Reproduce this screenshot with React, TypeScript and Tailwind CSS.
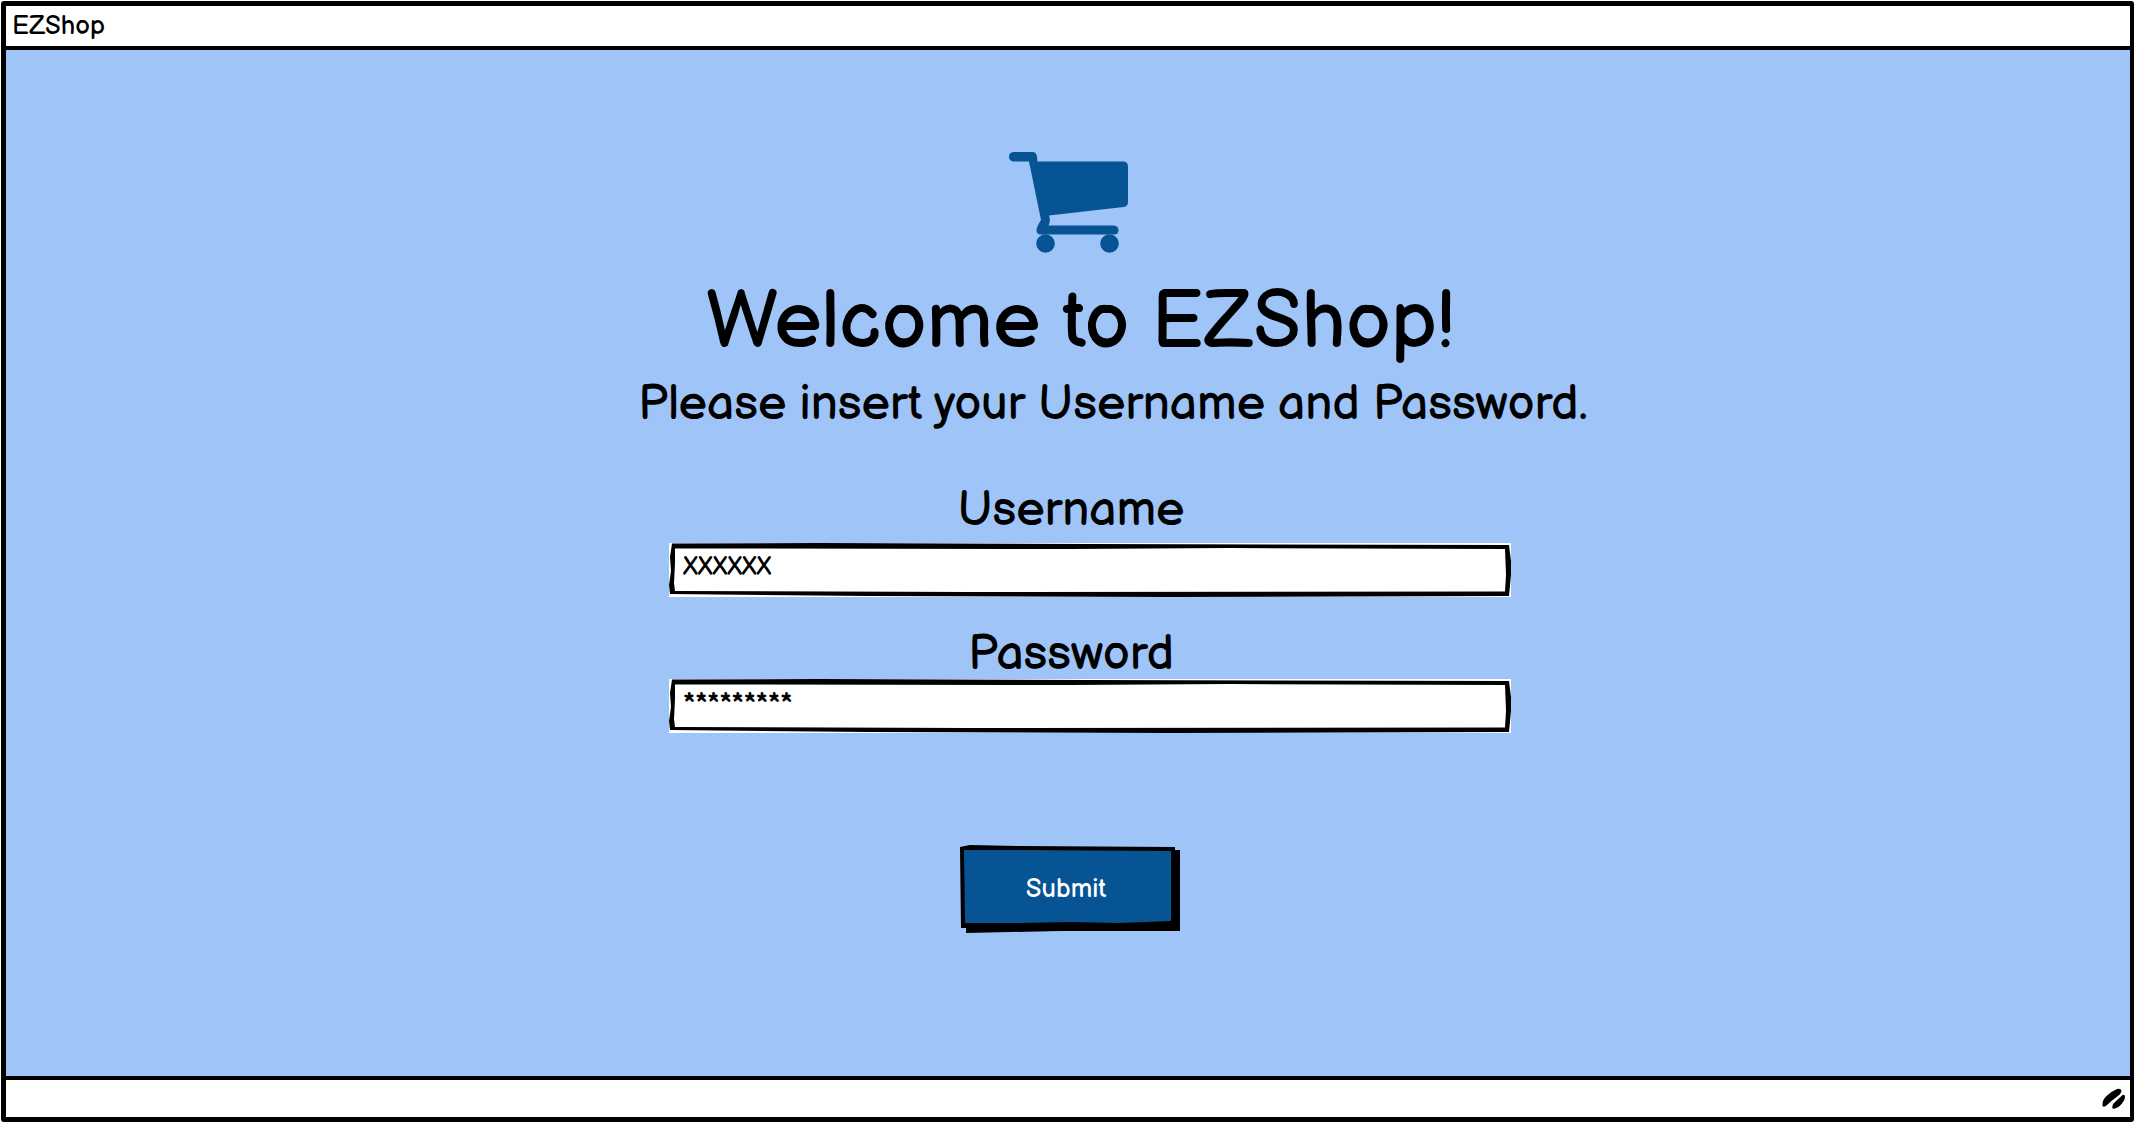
import type { ReactNode } from "react";

function Cart() {
  return (
    <svg viewBox="0 0 119 101" className="h-[101px] w-[119px]" fill="#075494" aria-hidden="true">
      <path d="M4.500 0H23.500Q27.500 0 28 5L28.500 9.500H114Q119 9.500 119 14.500V50Q119 54.500 114.500 55L40 63.500Q42 69 39.500 73.500H105Q109.500 74 109.500 78Q109.500 82.500 105 82.500H32Q27.500 82.500 27.500 78Q27.500 75 32 68L20 9.500H4.500Q0 9 0 4.750Q0 .500 4.500 0Z" />
      <circle cx="36.500" cy="91.500" r="9.300" />
      <circle cx="100.500" cy="91.500" r="9.300" />
    </svg>
  );
}

function ResizeGrip() {
  return (
    <svg viewBox="0 0 24 22" className="h-[22px] w-6" aria-hidden="true">
      <path d="M.500 18 Q0 12 4.500 8 Q10 3 15 1 Q19 0 19.500 3 Q19 6 14 9.500 Q9 13 5 17 Q2 20 .500 18Z" />
      <path d="M10.500 20.500 Q9.500 17 13 14 L20.500 7 Q23 6 23 9 Q23 12 20 15.500 Q15 21.500 10.500 20.500Z" />
    </svg>
  );
}

type FieldProps = { id: string; label: string; type: string; value: string; spaced?: boolean };

function Field({ id, label, type, value, spaced }: FieldProps) {
  return (
    <div className={`flex w-full flex-col items-center ${spaced ? "gap-2" : "gap-0"}`}>
      <label htmlFor={id} className="pl-1.5 text-5xl leading-12 font-medium">
        {label}
      </label>
      <div className="w-full pl-11">
        <div className="relative mx-auto h-[54px] w-full max-w-[842px] bg-white">
          <input
            id={id}
            type={type}
            defaultValue={value}
            className="h-full w-full bg-transparent px-3.5 pb-1.5 text-[26px] outline-none"
          />
          <svg
            viewBox="0 0 842 54"
            preserveAspectRatio="none"
            className="pointer-events-none absolute inset-0 h-full w-full"
            fillRule="evenodd"
            aria-hidden="true"
          >
            <path d="M3 .500 L150 0 L420 1 L840 2 L842 18 L842 32 L840 53 L500 54 L200 53 L1 51 L0 42 L2 28 L1 14Z M6 5.500 L6 20 L5 40 L6 48 L300 49 L836 48.500 L837 32 L836 6 L560 5 L400 6Z" />
          </svg>
        </div>
      </div>
    </div>
  );
}

function SubmitButton({ children }: { children: ReactNode }) {
  return (
    <button type="submit" className="relative h-[88px] w-[220px] pr-2 text-[26px] text-white">
      <svg viewBox="0 0 220 88" preserveAspectRatio="none" className="absolute inset-0 h-full w-full" aria-hidden="true">
        <path d="M0 2 L10 0 L60 1 L215 2 L215 5 L220 5 L220 86 L100 86 L50 87 L6 88 L6 83 L1 83Z" />
        <path d="M4 5 L50 5 L211 6 L211 76 L160 78 L110 77 L60 78 L5 78Z" fill="#075494" />
      </svg>
      <span className="relative">{children}</span>
    </button>
  );
}

export default function App() {
  return (
    <div className="flex min-h-screen bg-white p-px pb-0.5 font-['Balsamiq_Sans','Inter',sans-serif] text-black">
      <div className="flex flex-1 flex-col rounded-[3px] border-[5px] border-r-4 border-black">
        <header className="flex h-10 items-center pl-1.5 text-[26px]">EZShop</header>
        <main className="flex-1 border-y-4 border-black bg-[#9fc4f8]">
          <form className="flex flex-col items-center pt-[102px]" onSubmit={(e) => e.preventDefault()}>
            <Cart />
            <h1 className="mt-[22px] pl-6 text-[80px] leading-[96px] font-medium">Welcome to EZShop!</h1>
            <p className="mt-1 pl-[90px] text-5xl leading-[60px] font-medium">Please insert your Username and Password.</p>
            <div className="mt-[52px] flex w-full flex-col items-center gap-[34px]">
              <Field id="username" label="Username" type="text" value="XXXXXX" spaced />
              <Field id="password" label="Password" type="text" value="*********" />
            </div>
            <div className="mt-28 pl-1">
              <SubmitButton>Submit</SubmitButton>
            </div>
          </form>
        </main>
        <footer className="flex h-[37px] items-center justify-end pr-1">
          <ResizeGrip />
        </footer>
      </div>
    </div>
  );
}
